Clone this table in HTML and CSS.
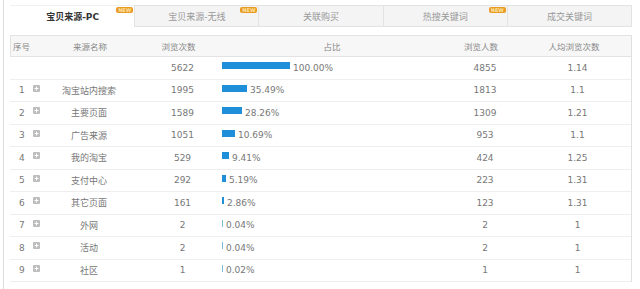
FILE: index.html
```html
<!DOCTYPE html>
<html lang="zh-CN">
<head>
<meta charset="utf-8">
<title>宝贝来源</title>
<link rel="stylesheet" href="styles.css">
</head>
<body>
<div class="page">
  <div class="tabs">
    <div class="tab active">宝贝来源-PC<span class="badge">NEW</span></div>
    <div class="tab">宝贝来源-无线<span class="badge">NEW</span></div>
    <div class="tab">关联购买</div>
    <div class="tab">热搜关键词<span class="badge">NEW</span></div>
    <div class="tab">成交关键词</div>
  </div>
  <div class="table">
    <div class="row head">
      <div class="c-no">序号</div>
      <div class="c-name">来源名称</div>
      <div class="c-pv">浏览次数</div>
      <div class="c-bar">占比</div>
      <div class="c-uv">浏览人数</div>
      <div class="c-avg">人均浏览次数</div>
    </div>
    <div class="row">
      <div class="c-no"></div>
      <div class="c-name"></div>
      <div class="c-pv">5622</div>
      <div class="c-bar"><span class="bar" style="width:68px"></span><span class="pct">100.00%</span></div>
      <div class="c-uv">4855</div>
      <div class="c-avg">1.14</div>
    </div>
    <div class="row">
      <div class="c-no"><span class="num">1</span><svg class="plus" viewBox="0 0 7 7"><rect width="7" height="7" rx="1"/><path d="M3.5 1.5v4M1.5 3.5h4"/></svg></div>
      <div class="c-name">淘宝站内搜索</div>
      <div class="c-pv">1995</div>
      <div class="c-bar"><span class="bar" style="width:25px"></span><span class="pct">35.49%</span></div>
      <div class="c-uv">1813</div>
      <div class="c-avg">1.1</div>
    </div>
    <div class="row">
      <div class="c-no"><span class="num">2</span><svg class="plus" viewBox="0 0 7 7"><rect width="7" height="7" rx="1"/><path d="M3.5 1.5v4M1.5 3.5h4"/></svg></div>
      <div class="c-name">主要页面</div>
      <div class="c-pv">1589</div>
      <div class="c-bar"><span class="bar" style="width:20px"></span><span class="pct">28.26%</span></div>
      <div class="c-uv">1309</div>
      <div class="c-avg">1.21</div>
    </div>
    <div class="row">
      <div class="c-no"><span class="num">3</span><svg class="plus" viewBox="0 0 7 7"><rect width="7" height="7" rx="1"/><path d="M3.5 1.5v4M1.5 3.5h4"/></svg></div>
      <div class="c-name">广告来源</div>
      <div class="c-pv">1051</div>
      <div class="c-bar"><span class="bar" style="width:13px"></span><span class="pct">10.69%</span></div>
      <div class="c-uv">953</div>
      <div class="c-avg">1.1</div>
    </div>
    <div class="row">
      <div class="c-no"><span class="num">4</span><svg class="plus" viewBox="0 0 7 7"><rect width="7" height="7" rx="1"/><path d="M3.5 1.5v4M1.5 3.5h4"/></svg></div>
      <div class="c-name">我的淘宝</div>
      <div class="c-pv">529</div>
      <div class="c-bar"><span class="bar" style="width:7px"></span><span class="pct">9.41%</span></div>
      <div class="c-uv">424</div>
      <div class="c-avg">1.25</div>
    </div>
    <div class="row">
      <div class="c-no"><span class="num">5</span><svg class="plus" viewBox="0 0 7 7"><rect width="7" height="7" rx="1"/><path d="M3.5 1.5v4M1.5 3.5h4"/></svg></div>
      <div class="c-name">支付中心</div>
      <div class="c-pv">292</div>
      <div class="c-bar"><span class="bar" style="width:4px"></span><span class="pct">5.19%</span></div>
      <div class="c-uv">223</div>
      <div class="c-avg">1.31</div>
    </div>
    <div class="row">
      <div class="c-no"><span class="num">6</span><svg class="plus" viewBox="0 0 7 7"><rect width="7" height="7" rx="1"/><path d="M3.5 1.5v4M1.5 3.5h4"/></svg></div>
      <div class="c-name">其它页面</div>
      <div class="c-pv">161</div>
      <div class="c-bar"><span class="bar" style="width:2px"></span><span class="pct">2.86%</span></div>
      <div class="c-uv">123</div>
      <div class="c-avg">1.31</div>
    </div>
    <div class="row">
      <div class="c-no"><span class="num">7</span><svg class="plus" viewBox="0 0 7 7"><rect width="7" height="7" rx="1"/><path d="M3.5 1.5v4M1.5 3.5h4"/></svg></div>
      <div class="c-name">外网</div>
      <div class="c-pv">2</div>
      <div class="c-bar"><span class="bar thin" style="width:1px"></span><span class="pct">0.04%</span></div>
      <div class="c-uv">2</div>
      <div class="c-avg">1</div>
    </div>
    <div class="row">
      <div class="c-no"><span class="num">8</span><svg class="plus" viewBox="0 0 7 7"><rect width="7" height="7" rx="1"/><path d="M3.5 1.5v4M1.5 3.5h4"/></svg></div>
      <div class="c-name">活动</div>
      <div class="c-pv">2</div>
      <div class="c-bar"><span class="bar thin" style="width:1px"></span><span class="pct">0.04%</span></div>
      <div class="c-uv">2</div>
      <div class="c-avg">1</div>
    </div>
    <div class="row">
      <div class="c-no"><span class="num">9</span><svg class="plus" viewBox="0 0 7 7"><rect width="7" height="7" rx="1"/><path d="M3.5 1.5v4M1.5 3.5h4"/></svg></div>
      <div class="c-name">社区</div>
      <div class="c-pv">1</div>
      <div class="c-bar"><span class="bar thin" style="width:1px"></span><span class="pct">0.02%</span></div>
      <div class="c-uv">1</div>
      <div class="c-avg">1</div>
    </div>
  </div>
</div>
</body>
</html>
```
FILE: styles.css
```css
* { box-sizing: border-box; }

body {
  margin: 0;
  background: #fff;
  font-family: "DejaVu Sans", "Noto Sans CJK SC", sans-serif;
  font-size: 9px;
  color: #777;
}

.page {
  margin-left: 3px;
  border-left: 1px solid #dcdcdc;
  padding: 5px 0 0 6px;
  width: 629px;
  height: 289px;
}

.tabs {
  display: flex;
  width: 622px;
  height: 22px;
}

.tab {
  flex: 1;
  position: relative;
  display: flex;
  align-items: center;
  justify-content: center;
  background: #f4f4f4;
  border: 1px solid #e3e3e3;
  border-right: none;
  color: #999;
}

.tab:last-child { border-right: 1px solid #e3e3e3; }

.tab.active {
  background: #fff;
  border-color: #efefef;
  border-left-color: transparent;
  border-bottom-color: transparent;
  color: #333;
  font-weight: bold;
}

.badge {
  position: absolute;
  top: 1px;
  right: 1px;
  width: 17px;
  height: 6px;
  border-radius: 2px;
  background: #e99a22;
  color: #fce3a6;
  font-size: 5px;
  line-height: 6px;
  font-weight: bold;
  text-align: center;
}

.table {
  margin-top: 8px;
  width: 622px;
  border-right: 1px solid #e0e0e0;
}

.row {
  display: grid;
  grid-template-columns: 48px 62px 102px 218px 90px 1fr;
  align-items: center;
  height: 22.5px;
  border-bottom: 1px solid #eeeeee;
}

.row.head {
  height: 22px;
  background: #f7f7f7;
  border-top: 1px solid #e3e3e3;
  border-left: 1px solid #e3e3e3;
  border-bottom-color: #e3e3e3;
  color: #888;
  font-size: 8.5px;
}

.c-no {
  display: flex;
  align-items: center;
  gap: 8px;
  padding-left: 9px;
}

.c-name { text-align: center; }
.c-pv { text-align: center; padding-left: 23px; }
.c-bar { display: flex; align-items: center; gap: 3px; }
.c-uv { text-align: center; }
.c-avg { text-align: center; padding-right: 6px; }

.head .c-no { padding-left: 2px; }
.head .c-pv { padding-left: 13px; }
.head .c-bar { justify-content: center; }
.head .c-uv { padding-right: 10px; }
.head .c-avg { padding-right: 14px; }

.bar {
  display: block;
  height: 7px;
  margin-bottom: 4px;
  background: #1f8fda;
}

.bar.thin { background: #79bcd6; }

.plus {
  width: 7px;
  height: 7px;
  margin-bottom: 4px;
}

.plus rect { fill: #bdbdbd; }
.plus path { stroke: #fff; stroke-width: 1; fill: none; }
```
